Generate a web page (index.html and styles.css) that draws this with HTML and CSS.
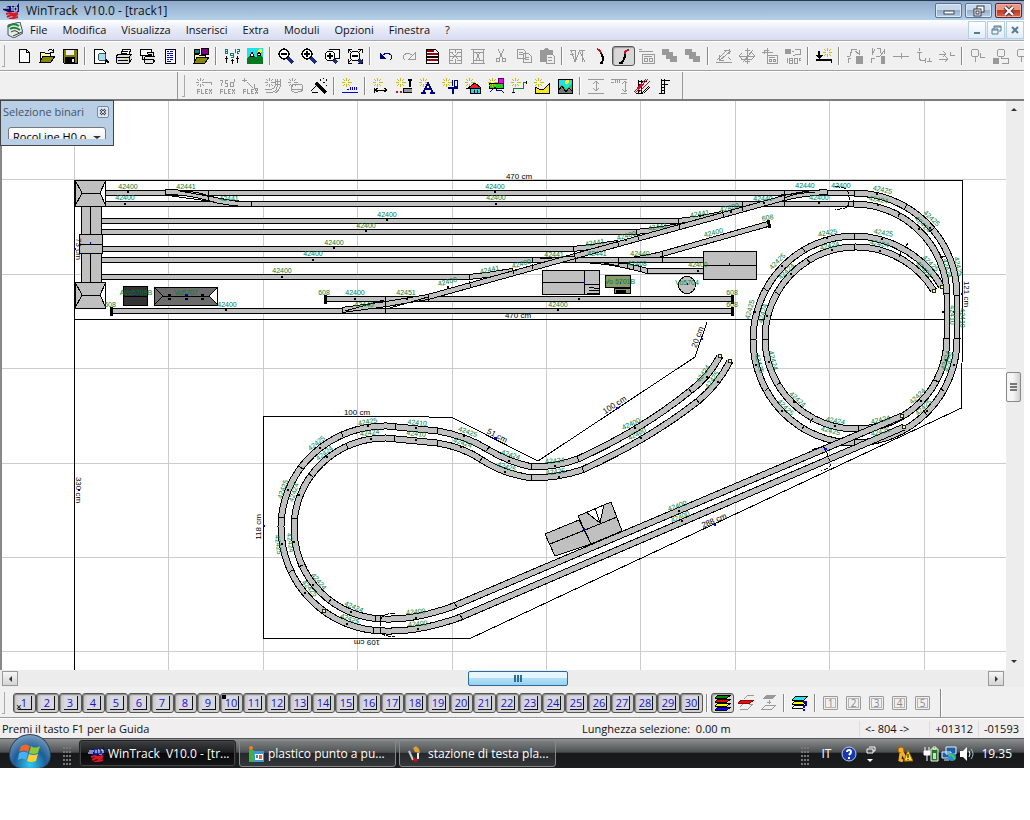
FILE: index.html
```html
<!DOCTYPE html>
<html lang="it">
<head>
    <meta charset="UTF-8">
    <meta name="viewport" content="width=device-width, initial-scale=1.0">
    <title>WinTrack V10.0 - [track1]</title>
    <link rel="stylesheet" href="styles.css">
</head>
<body>

<!-- shapes used by more than one icon -->
<svg class="sprite" aria-hidden="true">
    <symbol id="spark" viewBox="0 0 16 16"><path d="M4.500 0v3M4.500 6v3M0 4.500h3M6 4.500h4M1 1l2 2M8 1l-2 2M1 8l2-2M8 8l-2-2"/></symbol>
    <symbol id="lens" viewBox="0 0 16 16"><path d="M10 10l5 5" stroke="#1c2c80" stroke-width="3"/><circle cx="6" cy="6" r="5" fill="#fff" stroke="#000" stroke-width="1.500"/></symbol>
    <symbol id="loco" viewBox="0 0 16 16"><path d="M0 6l5-3h9l2-3v9H5L0 7z" fill="#10106a"/><path d="M1 5h5" stroke="#fff" stroke-width="1"/><path d="M8 4h1v4M11 4h3v4h-3z" stroke="#fff" fill="none"/><path d="M3 11l4-1 3 1 5-1M4 14l4-2 3 1 4-2M6 16l9-2" stroke="#d81828" stroke-width="2" fill="none"/></symbol>
    <symbol id="stack" viewBox="0 0 16 16"><path d="M0 1h7v3h4v4h4v6H8v-3H4V7H0z"/></symbol>
</svg>

<div class="window">

    <header class="titlebar">
        <svg class="icon" viewBox="0 0 16 16"><use href="#loco"/></svg>
        <h1>WinTrack&nbsp; V10.0 - [track1]</h1>
        <div class="caption-buttons">
            <button aria-label="Riduci a icona"><svg viewBox="0 0 16 12"><rect x="3" y="6" width="10" height="3" fill="#fff" stroke="#445"/></svg></button>
            <button aria-label="Ripristina"><svg viewBox="0 0 16 12"><rect x="6" y="1" width="7" height="6" fill="#fff" stroke="#334"/><rect x="3" y="4" width="7" height="7" fill="#fff" stroke="#334"/><rect x="5" y="6" width="3" height="3" fill="none" stroke="#334"/></svg></button>
            <button class="close" aria-label="Chiudi"><svg viewBox="0 0 16 12"><path d="M4 2l8 8M12 2l-8 8" stroke="#534" stroke-width="4"/><path d="M4 2l8 8M12 2l-8 8" stroke="#fff" stroke-width="2"/></svg></button>
        </div>
    </header>

    <nav class="menubar">
        <svg class="icon" viewBox="0 0 16 16"><path d="M1 3l12-3 3 11-9 5-6-3z" fill="#e4ece4" stroke="#456"/><path d="M1 5q5-5 11-1M3 7q5-3 10 1" fill="none" stroke="#228040" stroke-width="2"/><path d="M4 10q4-3 8 1M6 14l9-4" fill="none" stroke="#333"/></svg>
        <button>File</button>
        <button>Modifica</button>
        <button>Visualizza</button>
        <button>Inserisci</button>
        <button>Extra</button>
        <button>Moduli</button>
        <button>Opzioni</button>
        <button>Finestra</button>
        <button>?</button>
        <div class="mdi-buttons">
            <button aria-label="Riduci documento"><svg viewBox="0 0 12 12"><path d="M3 9h6" stroke="#567a94" stroke-width="2"/></svg></button>
            <button aria-label="Ripristina documento"><svg viewBox="0 0 12 12"><path d="M4 5V2h7v5H9M4 3h7M2 5h6v5H2zM2 6h6" fill="none" stroke="#567a94"/></svg></button>
            <button aria-label="Chiudi documento"><svg viewBox="0 0 12 12"><path d="M3 3l6 6M9 3l-6 6" stroke="#567a94" stroke-width="2"/></svg></button>
        </div>
    </nav>

    <div class="toolbar main-tools" role="toolbar" aria-label="Standard">
        <span class="grip"></span>
        <button class="tool" aria-label="Nuovo"><svg class="icon" viewBox="0 0 16 16"><path d="M3 1h7l3 3v10H3zM10 1v3h3" fill="#fff" stroke="#000"/></svg></button>
        <button class="tool" aria-label="Apri"><svg class="icon" viewBox="0 0 16 16"><path d="M1 14V4h4l1 1h5v3" fill="#ffffa0" stroke="#000"/><path d="M1 14l3-6h12l-4 6z" fill="#868600" stroke="#000"/><path d="M9 3q3-3 5 0M14 1v3h-3" fill="none" stroke="#000"/></svg></button>
        <button class="tool" aria-label="Salva"><svg class="icon" viewBox="0 0 16 16"><path d="M1 1h14v14H2l-1-1z" fill="#808000" stroke="#000"/><path d="M4 2h8v5H4z" fill="#eee"/><path d="M3 9h10v6H3z" fill="#000"/><path d="M10 11h2v3h-2z" fill="#eee"/></svg></button>
        <span class="sep"></span>
        <button class="tool" aria-label="Anteprima"><svg class="icon" viewBox="0 0 16 16"><path d="M1 1h8l3 3v11H1z" fill="#fff" stroke="#000"/><path d="M12 11l4 4" stroke="#000" stroke-width="2"/><circle cx="9" cy="9" r="4" fill="#a8dce8" stroke="#356"/></svg></button>
        <button class="tool" aria-label="Stampa"><svg class="icon" viewBox="0 0 16 16"><path d="M5 6l2-5h8l-2 5" fill="#fff" stroke="#000"/><path d="M0 8l3-2h13v5l-3 4H1z" fill="#ddd" stroke="#000"/><path d="M7 3h5M6 5h5M1 9h12v5M13 9l3-3M2 12h10" fill="none" stroke="#000"/><path d="M9 11h2" stroke="#cc0"/></svg></button>
        <button class="tool" aria-label="Imposta stampa"><svg class="icon" viewBox="0 0 16 16"><path d="M1 1h11v6H1z" fill="#fff" stroke="#000"/><path d="M3 8v3h4M8 6l1-2h6l-1 4M5 10l2-2h9v4l-2 3H6z" fill="#e4e4e4" stroke="#000"/><path d="M6 11h8v3M9 6h4" fill="none" stroke="#000"/></svg></button>
        <button class="tool" aria-label="Elenco"><svg class="icon" viewBox="0 0 16 16"><path d="M3 1h10v14H3z" fill="#fff" stroke="#000"/><path d="M5 3h2M8 3h3M5 5h6M5 7h2M8 7h3M5 9h6M5 11h2M8 11h3M5 13h4" stroke="#0000d0"/></svg></button>
        <span class="sep"></span>
        <button class="tool" aria-label="Biblioteca"><svg class="icon" viewBox="0 0 16 16"><path d="M1 1h5v4H1z" fill="#008080" stroke="#000"/><path d="M8 0h7v6H8z" fill="#800080" stroke="#000"/><path d="M1 15V6h4l1 1h6v3" fill="#ffff80" stroke="#000"/><path d="M1 15l3-6h12l-4 6z" fill="#868600" stroke="#000"/></svg></button>
        <span class="sep"></span>
        <button class="tool" aria-label="Altezze"><svg class="icon" viewBox="0 0 16 16"><path d="M1 1h2v4H1zM1 3h2M6 5h3v4H7M6 5v2h3M11 1v4M13 1h2v2h-2v2h2" fill="none" stroke="#008080"/><path d="M2 8v7M1 10h3M8 11v5M7 12h3M13 8v7M12 10h3" fill="none" stroke="#000"/></svg></button>
        <button class="tool" aria-label="Sfondo"><svg class="icon" viewBox="0 0 16 16"><path d="M0 0h16v16H0z" fill="#20e0e8"/><circle cx="13" cy="3" r="2" fill="#ff0"/><path d="M0 11l5-6 4 5 3-5 4 5v6H0z" fill="#087820"/><path d="M3 8l2-4 2 4-2 1zM10 7l2-3 2 3-2 1z" fill="#fff" stroke="#000"/></svg></button>
        <span class="sep"></span>
        <button class="tool" aria-label="Riduci"><svg class="icon" viewBox="0 0 16 16"><use href="#lens"/><path d="M3 6h6" stroke="#000" stroke-width="2"/></svg></button>
        <button class="tool" aria-label="Ingrandisci"><svg class="icon" viewBox="0 0 16 16"><use href="#lens"/><path d="M3 6h6M6 3v6" stroke="#000" stroke-width="2"/></svg></button>
        <button class="tool" aria-label="Ingrandisci area"><svg class="icon" viewBox="0 0 16 16"><path d="M5 1h10v9h-4" fill="#fff" stroke="#000"/><path d="M9 11l4 4" stroke="#1c2c80" stroke-width="3"/><circle cx="6" cy="8" r="5" fill="#fff" stroke="#000"/><path d="M3 8h6M6 5v6" stroke="#000" stroke-width="2"/></svg></button>
        <button class="tool" aria-label="Mostra tutto"><svg class="icon" viewBox="0 0 16 16"><path d="M1 5V1h4M1 1l3 3M11 1h4v4M15 1l-3 3M1 11v4h4M1 15l3-3M15 11v4h-4" fill="none" stroke="#000"/><path d="M11 11l4 4" stroke="#1c2c80" stroke-width="3"/><circle cx="8" cy="8" r="5" fill="#fff" stroke="#000"/><path d="M5 8h6" stroke="#000" stroke-width="2"/></svg></button>
        <span class="sep"></span>
        <button class="tool" aria-label="Annulla"><svg class="icon" viewBox="0 0 16 16"><path d="M2 5v6h6z" fill="#00007c"/><path d="M4 8q5-5 9-1 2 3-1 5" class="ln navy"/></svg></button>
        <button class="tool" aria-label="Ripeti"><svg class="icon" viewBox="0 0 16 16"><path d="M14 5v6H8zM12 8q-5-5-9-1-2 3 1 5" class="ln dis"/></svg></button>
        <button class="tool" aria-label="Lista materiale"><svg class="icon" viewBox="0 0 16 16"><path d="M2 1h9l3 3v11H2z" fill="#fff" stroke="#000"/><path d="M3 3h7M3 6h11M3 12h11" stroke="#900" stroke-width="2"/><path d="M3 9h11" stroke="#000" stroke-width="2"/></svg></button>
        <button class="tool" aria-label="Dividi" disabled><svg class="icon" viewBox="0 0 16 16"><path d="M2 1h12v14H2zM2 8h12M8 1v4M8 11v4M2 4h4M10 4h4M2 12h4M10 12h4M5 5l6 6M11 5l-6 6" class="ln dis"/></svg></button>
        <button class="tool" aria-label="Unisci" disabled><svg class="icon" viewBox="0 0 16 16"><path d="M1 1h14M1 15h14M3 1v14M13 1v14M3 4h10M3 12h10M6 4l4 8M10 4l-4 8" class="ln dis"/></svg></button>
        <button class="tool" aria-label="Taglia" disabled><svg class="icon" viewBox="0 0 16 16"><path d="M5 1l5 10M11 1L6 11" class="ln dis"/><circle cx="5" cy="12" r="2" class="ln dis"/><circle cx="11" cy="12" r="2" class="ln dis"/></svg></button>
        <button class="tool" aria-label="Copia" disabled><svg class="icon" viewBox="0 0 16 16"><path d="M1 1h6l2 2v7H1zM3 4h4M3 6h4M7 5h5l3 3v6H7zM9 9h4M9 11h4" class="ln dis"/></svg></button>
        <button class="tool" aria-label="Incolla" disabled><svg class="icon" viewBox="0 0 16 16"><path d="M1 2h4l1-2h3l1 2h4v12H1z" fill="#999"/><path d="M7 6h6l2 2v7H7zM9 9h4M9 12h4" fill="#eee" stroke="#999"/></svg></button>
        <span class="sep"></span>
        <button class="tool" aria-label="Binari doppi" disabled><svg class="icon" viewBox="0 0 16 16"><path d="M0 2h6M1 2l4 12L10 2h5M10 4l5 10M5 2l1 12M0 6h4M12 3v11" class="ln dis"/></svg></button>
        <button class="tool" aria-label="Curva sinistra"><svg class="icon" viewBox="0 0 16 16"><path d="M8 5q3 4 1 10M7 15h3" class="ln bold"/><path d="M4 1q3 1 4 4" class="ln bold red"/></svg></button>
        <button class="tool pressed" aria-label="Curva destra" aria-pressed="true"><svg class="icon" viewBox="0 0 16 16"><path d="M5 15q4-3 4-9M3 15h4" class="ln bold"/><path d="M9 6q0-4 4-4" class="ln bold red"/></svg></button>
        <button class="tool" aria-label="Proprietà" disabled><svg class="icon" viewBox="0 0 16 16"><path d="M0 1h3M0 3h14M3 6h12v9H3zM5 8h8M5 10h3v3H5zM10 10h3v3h-3z" class="ln dis"/></svg></button>
        <button class="tool" aria-label="Porta avanti" disabled><svg class="icon gray" viewBox="0 0 16 16"><use href="#stack"/></svg></button>
        <button class="tool" aria-label="Porta indietro" disabled><svg class="icon gray" viewBox="0 0 16 16"><use href="#stack"/></svg></button>
        <span class="sep"></span>
        <button class="tool" aria-label="Ruota" disabled><svg class="icon" viewBox="0 0 16 16"><path d="M0 14h16M1 12L11 2M8 2h5M13 1v5M4 12l11-9M3 7v5h5M12 9l3 3" class="ln dis"/></svg></button>
        <button class="tool" aria-label="Sposta" disabled><svg class="icon" viewBox="0 0 16 16"><path d="M0 8h16M2 11h11M8 0v16M6 2h5M6 13h5M3 5l-3 3 3 3M13 5l3 3-3 3M4 14L14 2" class="ln dis"/></svg></button>
        <button class="tool" aria-label="Posizione" disabled><svg class="icon" viewBox="0 0 16 16"><path d="M0 4h11M5 0v9M3 2h4M2 2v4M5 7h10v8H5zM7 9h6M7 11h2v2H7zM11 11h2v2h-2z" class="ln dis"/></svg></button>
        <button class="tool" aria-label="Ruota di 180°" disabled><svg class="icon" viewBox="0 0 16 16"><path d="M0 1h6v5H0z" fill="#999"/><path d="M7 3h2M10 1h5v5h-5M8 7h2M2 10v5M4 10h3v5H4zM4 12h3M9 10h3v5H9zM14 10h2v2h-2z" class="ln dis"/></svg></button>
        <span class="sep"></span>
        <button class="tool" aria-label="Nuovo livello"><svg class="icon" viewBox="0 0 16 16"><path d="M2 3h2v4h3l-4 4-3-4h2zM0 11h16v4h-1v-2H0z"/><g class="sun" transform="translate(7 0)"><use href="#spark" width="16" height="16"/></g></svg></button>
        <span class="sep"></span>
        <button class="tool" aria-label="Pendenza" disabled><svg class="icon" viewBox="0 0 16 16"><path d="M0 8h3L5 1h5M8 3l4 3V2M1 15v-5h3" class="ln dis"/><path d="M9 8h7v8H9z" fill="#999"/></svg></button>
        <button class="tool" aria-label="Rampa" disabled><svg class="icon" viewBox="0 0 16 16"><path d="M2 0v5M5 1L2 7M7 0h3v5M6 8h4L14 3M14 1v5M1 15v-5h4" class="ln dis"/><path d="M11 8h4v8h-4z" fill="#999"/></svg></button>
        <button class="tool" aria-label="Congiungi" disabled><svg class="icon" viewBox="0 0 16 16"><path d="M0 8h16M8 5v6" class="ln dis"/></svg></button>
        <button class="tool" aria-label="Flessibile" disabled><svg class="icon" viewBox="0 0 16 16"><path d="M3 0v3M1 4h5M3 5v5q1 3 6 3M9 10v5M11 13h5M13 10v3" class="ln dis"/></svg></button>
        <button class="tool" aria-label="Allinea" disabled><svg class="icon" viewBox="0 0 16 16"><path d="M0 6h7M4 3l3 3-3 3M0 11h9M6 8l3 3-3 3M11 4v3h5" class="ln dis"/></svg></button>
        <span class="sep"></span>
        <button class="tool" aria-label="Albero" disabled><svg class="icon" viewBox="0 0 16 16"><circle cx="5" cy="5" r="4" class="ln dis"/><path d="M5 8v6M3 8h4M10 5v4h5" class="ln dis"/></svg></button>
        <button class="tool" aria-label="Alberi" disabled><svg class="icon" viewBox="0 0 16 16"><circle cx="8" cy="5" r="4" class="ln dis"/><path d="M8 8v3M9 10h6v5H9" class="ln dis"/><path d="M0 10h6v6H0z" fill="#999"/></svg></button>
        <button class="tool" aria-label="Bosco" disabled><svg class="icon" viewBox="0 0 16 16"><circle cx="5" cy="5" r="4" class="ln dis"/><path d="M5 8v6M3 8h4M10 5v4h5" class="ln dis"/></svg></button>
    </div>

    <div class="toolbar insert-tools" role="toolbar" aria-label="Inserisci">
        <div class="band">
            <span class="grip"></span>
            <button class="tool" aria-label="Flex curvo" disabled><svg class="icon" viewBox="0 0 16 16"><g class="faint"><use href="#spark" width="16" height="16"/></g><path d="M9 4h6v3M1 16v-5h3M1 13h3M5 11v4h3M12 11h-3v4h3M9 13h2M13 11l3 5M16 11l-3 5" class="ln dis"/></svg></button>
            <button class="tool" aria-label="Flex 75 cm" disabled><svg class="icon" viewBox="0 0 16 16"><path d="M1 2h3L2 8M9 2H6v3h2v3H6M11 4h3v4h-3zM15 1v3M1 16v-5h3M1 13h3M5 11v4h3M12 11h-3v4h3M9 13h2M13 11l3 5M16 11l-3 5" class="ln dis"/></svg></button>
            <button class="tool" aria-label="Flex libero" disabled><svg class="icon" viewBox="0 0 16 16"><path d="M2 0v4M0 2h5M5 4l6 6M12 6v4h4M1 16v-5h3M1 13h3M5 11v4h3M12 11h-3v4h3M9 13h2M13 11l3 5M16 11l-3 5" class="ln dis"/></svg></button>
            <button class="tool" aria-label="Parallelo" disabled><svg class="icon" viewBox="0 0 16 16"><g class="faint"><use href="#spark" width="16" height="16"/></g><path d="M10 1v7q0 4-10 4M12 1v8q0 6-11 6M15 1v8q-1 4-5 6M10 3h5M10 6h5" class="ln dis"/></svg></button>
            <button class="tool" aria-label="Elicoidale" disabled><svg class="icon" viewBox="0 0 16 16"><g class="faint"><use href="#spark" width="16" height="16"/></g><ellipse cx="9" cy="9" rx="6" ry="3" class="ln dis"/><path d="M3 10q0 5 7 4 4 0 5-3" class="ln dis"/></svg></button>
            <button class="tool" aria-label="Procedura guidata"><svg class="icon" viewBox="0 0 16 16"><path d="M5 5l10 10" stroke="#000" stroke-width="3"/><path d="M0 13l8-8M1 14h6M9 1v2M12 0v1M15 1v2M12 4h2M15 7v1" class="ln"/></svg></button>
            <span class="sep"></span>
            <button class="tool" aria-label="Nuovo binario"><svg class="icon" viewBox="0 0 16 16"><g class="sun"><use href="#spark" width="16" height="16"/></g><path d="M0 14h16M5 11h2M8 9v3M10 9v3M12 9v3M14 9v3" class="ln blue"/></svg></button>
            <span class="sep"></span>
            <button class="tool" aria-label="Quota"><svg class="icon" viewBox="0 0 16 16"><g class="sun"><use href="#spark" width="16" height="16"/></g><path d="M1 10v5M16 10v5M2 12h12M5 10l-3 2 3 2M11 10l3 2-3 2" class="ln"/></svg></button>
            <button class="tool" aria-label="Contatto"><svg class="icon" viewBox="0 0 16 16"><g class="sun"><use href="#spark" width="16" height="16"/></g><path d="M14 1v8M12 2h4" class="ln bold"/><path d="M7 10h9v4H7z" fill="#999" stroke="#000"/><path d="M0 14h2M4 14h2" class="ln red bold"/></svg></button>
            <button class="tool" aria-label="Testo"><svg class="icon" viewBox="0 0 16 16"><g class="sun"><use href="#spark" width="16" height="16"/></g><path d="M4 15l5-10 5 10M6 11h6M2 15h5M11 15h5" class="ln navy bold"/></svg></button>
            <button class="tool" aria-label="Altezza"><svg class="icon" viewBox="0 0 16 16"><g class="sun"><use href="#spark" width="16" height="16"/></g><path d="M10 2v6M12 2h3v6h-3z" class="ln navy"/><path d="M6 10h10M11 10v6" class="ln navy bold"/></svg></button>
            <button class="tool" aria-label="Edificio"><svg class="icon" viewBox="0 0 16 16"><g class="sun"><use href="#spark" width="16" height="16"/></g><path d="M3 10l7-5 6 5z" fill="#f02020" stroke="#000"/><path d="M5 10h10v5H5z" fill="#20d8e8" stroke="#000"/><path d="M9 12v3M12 12v3" class="ln"/></svg></button>
            <button class="tool" aria-label="Paesaggio"><svg class="icon" viewBox="0 0 16 16"><path d="M1 5h14v5H1z" fill="#20d020" stroke="#000"/><circle cx="13" cy="3" r="3" fill="#f0f" stroke="#505"/><path d="M2 14l5-5 2 4 4-1 3 3" class="ln navy"/><g class="sun"><use href="#spark" width="16" height="16"/></g></svg></button>
            <button class="tool" aria-label="Linea"><svg class="icon" viewBox="0 0 16 16"><g class="sun"><use href="#spark" width="16" height="16"/></g><path d="M2 15V10h10V4h4" fill="none" stroke="#108030"/><path d="M1 14h3M15 3v3" class="ln"/></svg></button>
            <button class="tool" aria-label="Terreno"><svg class="icon" viewBox="0 0 16 16"><g class="sun"><use href="#spark" width="16" height="16"/></g><path d="M1 9l4 2h5l5-5v9H1z" fill="#f8e820" stroke="#000"/></svg></button>
            <button class="tool" aria-label="Immagine"><svg class="icon" viewBox="0 0 16 16"><path d="M1 1h14v14H1z" fill="#20e0e8"/><circle cx="10" cy="4" r="2" fill="#ff0"/><path d="M1 12l4-6 4 5 5-5 1 1v8H1z" fill="#30c040"/><path d="M1 13l4-5 4 6 3-4 3 3v2H1z" fill="#777"/><path d="M1 1h14v14H1zM1 13l4-5 4 6 3-4 3 3" class="ln"/></svg></button>
            <span class="sep"></span>
            <button class="tool" aria-label="Distanza verticale" disabled><svg class="icon" viewBox="0 0 16 16"><path d="M0 1h16M0 15h16M8 3v10M5 6l3-3 3 3M5 10l3 3 3-3" class="ln dis"/></svg></button>
            <button class="tool" aria-label="Distanza binario" disabled><svg class="icon" viewBox="0 0 16 16"><path d="M0 4h3M4 2v3M6 2v3M8 2v3M0 1h16M14 4v10M11 6l3-3 3 3M11 11l3 3 3-3M10 15h6" class="ln dis"/></svg></button>
            <button class="tool" aria-label="Catenaria"><svg class="icon" viewBox="0 0 16 16"><path d="M4 2v14M7 2v14M4 3h9M4 6h5M4 9h3M4 12h3M2 15h7M10 15l6-6M8 15l7-7" class="ln"/><path d="M0 14L12 1M5 14L16 3M1 15L14 1" class="ln red"/></svg></button>
            <button class="tool" aria-label="Palo"><svg class="icon" viewBox="0 0 16 16"><path d="M4 1v15M7 1v15" class="ln"/><path d="M4 2h9M4 6h7M4 9h3M4 12h3M2 15h6" class="ln"/></svg></button>
        </div>
    </div>

    <main class="workspace">
        <svg class="plan" viewBox="2 101 1004 569" preserveAspectRatio="xMinYMin slice" role="img" aria-label="Piano dei binari">
            <defs>
                <!-- stazione -->
                <path id="t1" d="M106 193H854"/>
                <path id="t2" d="M106 204H854"/>
                <path id="t3" d="M101 221H678Q700 219 722 214"/>
                <path id="t4" d="M101 232H636Q658 230 679 226"/>
                <path id="t5" d="M101 249H573Q595 247 617 243"/>
                <path id="t6" d="M101 260H703"/>
                <path id="t7" d="M101 277H469Q490 275 512 271"/>
                <path id="t8" d="M326 299H732"/>
                <path id="t9" d="M112 311H732"/>
                <path id="t10" d="M342 310Q385 305 428 297L784 198Q805 193 827 192"/>
                <path id="t11" d="M165 192Q188 192 208 198T251 204"/>
                <path id="t12" d="M575 260Q598 260 618 264T647 271H703"/>
                <path id="t13" d="M618 261Q640 260 662 254L768 224"/>
                <!-- anello a destra -->
                <path id="r1" d="M854 193A103 103 0 0 1 957 295V338A103 104 0 0 1 855 443A102 104 0 0 1 753 340A102 104 0 0 1 855 236A103 104 0 0 1 942 287"/>
                <path id="r2" d="M853 204A93 93 0 0 1 947 295V338A91 91 0 0 1 856 429A91 91 0 1 1 934 291"/>
                <!-- cappio a sinistra -->
                <path id="b1" d="M904 427L461 617Q420 632 385 631A104 104 0 0 1 281 527A104 101 0 0 1 387 426L438 431Q466 436 487 449T532 467Q556 467 578 459Q642 430 690 391Q708 378 720 356"/>
                <path id="b2" d="M902 416L454 606Q416 620 385 619A91 91 0 0 1 294 528A91 90 0 0 1 386 438L437 443Q463 447 482 460T531 478Q557 478 582 470Q648 440 697 402Q718 385 730 361"/>
            </defs>

            <g class="grid">
                <path d="M74.500 101V670M168.500 101V670M263.500 101V670M357.500 101V670M452.500 101V670M546.500 101V670M640.500 101V670M735.500 101V670M829.500 101V670M924.500 101V670"/>
                <path d="M2 179.500H1006M2 274.500H1006M2 368.500H1006M2 463.500H1006M2 557.500H1006M2 651.500H1006"/>
            </g>

            <g class="outline">
                <path d="M74.500 670V180.500H962.500V319L961.500 408L470 638.500H263.500V416.500H405L452 417.500L538 461L695 357L707 322"/>
                <path d="M74 319.500H945"/>
            </g>

            <g class="rail">
                <use href="#r1"/><use href="#r1" class="bed"/>
                <use href="#r2"/><use href="#r2" class="bed"/>
                <use href="#b1"/><use href="#b1" class="bed"/>
                <use href="#b2"/><use href="#b2" class="bed"/>
            </g>
            <g class="rail yard">
                <use href="#t12"/><use href="#t12" class="bed"/>
                <use href="#t13"/><use href="#t13" class="bed"/>
                <use href="#t1"/><use href="#t1" class="bed"/>
                <use href="#t2"/><use href="#t2" class="bed"/>
                <use href="#t3"/><use href="#t3" class="bed"/>
                <use href="#t4"/><use href="#t4" class="bed"/>
                <use href="#t5"/><use href="#t5" class="bed"/>
                <use href="#t6"/><use href="#t6" class="bed"/>
                <use href="#t7"/><use href="#t7" class="bed"/>
                <use href="#t8"/><use href="#t8" class="bed"/>
                <use href="#t9"/><use href="#t9" class="bed"/>
                <use href="#t10"/><use href="#t10" class="bed"/>
                <use href="#t11"/><use href="#t11" class="bed"/>
            </g>

            <!-- giunti -->
            <g class="joint">
                <path d="M165 190v6M208 190v12M251 201v6M342 308v6M385 296v18M428 294v8M469 274v6M469 281l2 6M512 268l2 6M532 257v6M532 264l1 5M574 251l2 12M617 240l2 6M637 234l2 6M678 218v6M679 224l1 6M722 210l2 7M742 201v10M784 190v16M827 190v6M854 190v6M853 201v6M618 257v10M662 251v12M628 263l-1 5M634 264l-1 6M641 267l-1 5M647 268v6M636 229v6M573 246v6"/>
                <path d="M784 198L806 191M770 196L815 192M345 311L384 300M390 308L428 297M575 256L540 259M600 262L618 266M172 196L208 201M180 191L240 202"/>
                <path d="M907 204l-3 6M900 212l-2 5M934 228l-5 4M945 256l-5 2M954 295h6M944 293h6M954 338h6M944 338h6M944 391l-4-3M939 382l-5-2M923 410l4 5M854 233v6M854 244v6M905 248l3-5M899 257l2-5M805 252l-3-5M810 263l-3-4M768 291l-5-3M780 295l-5-3M750 339h6M763 339h6M765 391l3-3M777 385l4-3M802 429l3-4M813 418l-3 5M858 426v6M854 440v6"/>
                <path d="M454 603l4 5M459 614l4 5M375 616v6M373 627v6M380 616v6M380 627v6M331 599l-3 5M303 565l-5 2M293 570l-5 3M291 518h6M279 517h6M308 473l5 4M299 466l5 4M346 443l2 6M341 431l2 6M394 435v6M395 424v6M437 440v6M438 428l-1 6M479 462l4-5M486 451l4-5M531 475v6M531 464v6M582 467l2 6M577 456l2 6M688 388l4 5M696 399l4 5"/>
            </g>

            <!-- centri dei binari -->
            <g class="dots">
                <path d="M127 192h2M124 204h2M186 192h2M494 192h2M495 204h2M386 220h2M365 231h2M333 248h2M312 260h2M281 277h2M225 310h2M557 310h2M354 299h2M578 299h2M818 203h2M730 212h2M699 216h2M625 240h2M515 270h2M447 287h2M406 299h2M697 271h2M763 203h2"/>
                <path d="M678 511h2M681 521h2M634 428h2M640 438h2M706 377h2M717 382h2M554 466h2M558 477h2M415 618h2M417 629h2M350 612h2M346 624h2M312 585h2M304 593h2M293 542h2M281 544h2M298 495h2M287 490h2M326 457h2M319 448h2M370 439h2M367 426h2M415 440h2M415 428h2M460 447h2M463 436h2M504 472h2M508 461h2"/>
                <path d="M876 194h2M877 205h2M918 229h2M929 228h2M953 312h2M942 312h2M945 360h2M953 365h2M920 401h2M926 411h2M834 426h2M793 402h2M781 411h2M768 362h2M755 365h2M754 312h2M766 316h2M781 266h2M790 274h2M826 238h2M831 250h2M881 239h2M879 251h2"/>
            </g>
            <g class="ends">
                <circle cx="934" cy="291" r="2"/><circle cx="942" cy="287" r="2"/><circle cx="902" cy="416" r="2"/><circle cx="904" cy="427" r="2"/><circle cx="720" cy="356" r="2"/><circle cx="730" cy="361" r="2"/><circle cx="324" cy="611" r="2"/>
            </g>

            <!-- respingenti -->
            <path class="buffer" d="M325 295v9M111 307v9M732 295v9M732 307v9M768 220l2 8"/>

            <!-- gallerie -->
            <path class="portal" d="M835 187q14-1 14 10v5q0 8-14 7M395 613q-15 1-15 9v8q0 6 15 7M812 450q6-4 13-2l6 16q0 4-10 7"/>

            <g class="building">
                <path d="M81.500 206.500h20v76h-20zM90.500 206v76"/>
                <path d="M75.500 180.500h30v26h-30zM75 180l7 13-7 13M106 180l-6 13 6 13M82 193.500h18"/>
                <path d="M79.500 234.500h23v19h-23zM79 244.500h24"/>
                <path d="M75.500 282.500h30v26h-30zM75 282l7 13-7 13M106 282l-6 13 6 13M82 295.500h18"/>
                <path d="M703.500 251.500h53v28h-53zM703 265.500h53"/>
                <path d="M542.500 270.500h57v24h-57zM584.500 270v24M542 282.500h42M584 284.500h16M589 287l10 2M589 290h10M587 293.500h12"/>
                <path d="M545 534L579 520L591 544L555 556ZM550 544L585 530"/>
                <path d="M578 516L611 502L622 531L591 544ZM585 530L617 517M586 512L600 523L604 505M595 508L600 523"/>
                <circle cx="687" cy="285" r="8.500"/>
            </g>
            <path class="house-dark" d="M123.500 286.500h24v19h-24zM123 296.500h24"/>
            <path class="house-mid" d="M154.500 287.500h63v18h-63zM154 287l9 9-9 9M218 287l-9 9 9 9M163 296.500h46"/>
            <path class="house-windows" d="M168 294h3v2h-3zM168 298h3v2h-3zM185 294h3v2h-3zM185 298h3v2h-3zM201 294h3v2h-3zM201 298h3v2h-3z"/>
            <path class="house-green" d="M605.500 275.500h25v12h-25zM614.500 288.500h16v5h-16z"/>
            <path class="house-windows" d="M616 290h10v3h-10z"/>
            <path class="anchor" d="M90 243h1M134 295h1M186 295h1M584 282h1M620 283h1M687 284h1M729 264h1M584 529h1M78 490h2M74 249h2M961 294h2M263 526h2M494 438h3M616 408h3M701 339h2M714 525h2M824 449h3"/>

            <!-- codici dei binari -->
            <g class="code">
                <text x="128" y="189">42400</text><text x="186" y="189">42441</text><text x="495" y="189">42400</text><text x="805" y="188">42440</text><text x="841" y="188">42400</text>
                <text x="125" y="200">42400</text><text x="229" y="201">42441</text><text x="496" y="200">42400</text><text x="763" y="201">42440</text><text x="819" y="200">42400</text>
                <text x="387" y="217">42400</text><text x="366" y="228">42400</text><text x="334" y="245">42400</text><text x="313" y="256">42400</text><text x="282" y="273">42400</text>
                <text transform="translate(700 216) rotate(-10)">42441</text><text transform="translate(658 229) rotate(-10)">42441</text><text transform="translate(595 245) rotate(-10)">42441</text><text transform="translate(627 238) rotate(-15)">42400</text>
                <text transform="translate(730 210) rotate(-15)">42400</text><text transform="translate(714 235) rotate(-14)">42400</text><text transform="translate(768 220) rotate(-10)">608</text>
                <text x="554" y="257">42441</text><text x="597" y="256">42441</text><text x="640" y="256">42440</text><text x="637" y="266">42408</text><text x="698" y="267">42400</text>
                <text transform="translate(490 272) rotate(-12)">42441</text><text transform="translate(522 266) rotate(-15)">42400</text><text transform="translate(448 284) rotate(-14)">42400</text>
                <text x="406" y="295">42451</text><text x="355" y="295">42400</text><text x="324" y="295">608</text><text x="110" y="307">608</text><text x="227" y="307">42400</text><text x="364" y="307">42440</text><text x="558" y="307">42400</text><text x="732" y="295">608</text><text x="732" y="307">608</text>
                <text x="136" y="295">AVo5709B</text><text x="186" y="295">Vo5707</text><text x="620" y="284">Vo 5701B</text><text x="687" y="285">Vo5704</text>

                <text transform="translate(882 192) rotate(12)">42425</text><text transform="translate(878 202) rotate(10)">42424</text><text transform="translate(930 220) rotate(43)">42425</text><text transform="translate(921 226) rotate(45)">42424</text>
                <text transform="translate(956 267) rotate(78)">42425</text><text transform="translate(945 269) rotate(75)">42424</text><text transform="translate(960 318) rotate(90)">42410</text><text transform="translate(950 315) rotate(90)">42410</text>
                <text transform="translate(828 235) rotate(-10)">42425</text><text transform="translate(830 248) rotate(-12)">42424</text><text transform="translate(883 235) rotate(10)">42425</text><text transform="translate(879 246) rotate(10)">42424</text>
                <text transform="translate(929 265) rotate(45)">42425</text><text transform="translate(922 271) rotate(48)">42424</text><text transform="translate(779 263) rotate(-45)">42425</text><text transform="translate(788 273) rotate(-45)">42424</text>
                <text transform="translate(752 310) rotate(-75)">42425</text><text transform="translate(765 314) rotate(-75)">42424</text><text transform="translate(757 364) rotate(75)">42425</text><text transform="translate(771 361) rotate(75)">42424</text>
                <text transform="translate(784 409) rotate(45)">42425</text><text transform="translate(796 401) rotate(42)">42424</text><text transform="translate(830 433) rotate(14)">42425</text><text transform="translate(835 423) rotate(10)">42424</text>
                <text transform="translate(881 422) rotate(-13)">42424</text><text transform="translate(881 434) rotate(-14)">42425</text><text transform="translate(919 398) rotate(-42)">42424</text><text transform="translate(925 409) rotate(-45)">42425</text>
                <text transform="translate(948 361) rotate(-73)">42424</text><text transform="translate(951 363) rotate(-73)">42425</text>

                <text transform="translate(368 424) rotate(-10)">42425</text><text transform="translate(370 435) rotate(-8)">42424</text><text transform="translate(417 425) rotate(6)">42410</text><text transform="translate(416 436) rotate(6)">42410</text>
                <text transform="translate(467 434) rotate(20)">42425</text><text transform="translate(462 445) rotate(18)">42424</text><text transform="translate(510 457) rotate(18)">42424</text><text transform="translate(506 469) rotate(18)">42425</text>
                <text transform="translate(318 445) rotate(-38)">42425</text><text transform="translate(326 455) rotate(-38)">42424</text><text transform="translate(285 490) rotate(-70)">42425</text><text transform="translate(296 493) rotate(-72)">42424</text>
                <text transform="translate(276 545) rotate(83)">42425</text><text transform="translate(288 543) rotate(83)">42424</text><text transform="translate(308 590) rotate(48)">42425</text><text transform="translate(317 583) rotate(50)">42424</text>
                <text transform="translate(349 621) rotate(20)">42425</text><text transform="translate(353 609) rotate(22)">42424</text><text transform="translate(416 614) rotate(-5)">42400</text><text transform="translate(418 626) rotate(-5)">42400</text>
                <text transform="translate(555 463) rotate(-5)">42424</text><text transform="translate(556 474) rotate(-8)">42425</text><text transform="translate(632 426) rotate(-25)">42400</text><text transform="translate(638 436) rotate(-28)">42400</text>
                <text transform="translate(705 375) rotate(-55)">42424</text><text transform="translate(714 381) rotate(-55)">42425</text><text transform="translate(678 508) rotate(-20)">42400</text><text transform="translate(681 519) rotate(-22)">42400</text>
            </g>

            <!-- quote -->
            <g class="measure">
                <text x="519" y="179">470 cm</text>
                <text x="518" y="318">470 cm</text>
                <text x="357" y="415">100 cm</text>
                <text transform="translate(76 249) rotate(90)">73 cm</text>
                <text transform="translate(76 490) rotate(90)">330 cm</text>
                <text transform="translate(964 294) rotate(90)">121 cm</text>
                <text transform="translate(261 527) rotate(-90)">118 cm</text>
                <text transform="translate(367 640) rotate(180)">109 cm</text>
                <text transform="translate(496 438) rotate(27)">51 cm</text>
                <text transform="translate(616 407) rotate(-33)">100 cm</text>
                <text transform="translate(700 338) rotate(-70)">20 cm</text>
                <text transform="translate(715 523) rotate(-23)">288 cm</text>
            </g>
        </svg>

        <div class="scroll-v">
            <button class="arrow" aria-label="Su"><i class="tri up"></i></button>
            <span class="space-a"></span>
            <button class="thumb" aria-label="Scorri in verticale"><i></i><i></i><i></i></button>
            <span class="space-b"></span>
            <button class="arrow" aria-label="Giù"><i class="tri down"></i></button>
        </div>

        <aside class="palette">
            <div class="palette-head">
                <label for="system">Selezione binari</label>
                <button aria-label="Chiudi palette"><svg viewBox="0 0 12 12"><path d="M3 3l6 6M9 3l-6 6" stroke="#445" stroke-width="3"/><path d="M3 3l6 6M9 3l-6 6" stroke="#fff"/></svg></button>
            </div>
            <div class="palette-body">
                <select id="system">
                    <option>RocoLine H0 o</option>
                </select>
                <i class="tri down"></i>
            </div>
        </aside>
    </main>

    <div class="scroll-h">
        <button class="arrow framed" aria-label="Sinistra"><i class="tri left"></i></button>
        <span class="space-a"></span>
        <button class="thumb" aria-label="Scorri in orizzontale"><i></i><i></i><i></i></button>
        <span class="space-b"></span>
        <button class="arrow framed" aria-label="Destra"><i class="tri right"></i></button>
    </div>

    <div class="toolbar layer-tools" role="toolbar" aria-label="Livelli">
        <span class="grip"></span>
        <button class="layer crossed"><span>1</span></button>
        <button class="layer"><span>2</span></button>
        <button class="layer"><span>3</span></button>
        <button class="layer"><span>4</span></button>
        <button class="layer"><span>5</span></button>
        <button class="layer"><span>6</span></button>
        <button class="layer"><span>7</span></button>
        <button class="layer"><span>8</span></button>
        <button class="layer"><span>9</span></button>
        <button class="layer current"><span>10</span></button>
        <button class="layer"><span>11</span></button>
        <button class="layer"><span>12</span></button>
        <button class="layer"><span>13</span></button>
        <button class="layer"><span>14</span></button>
        <button class="layer"><span>15</span></button>
        <button class="layer"><span>16</span></button>
        <button class="layer"><span>17</span></button>
        <button class="layer"><span>18</span></button>
        <button class="layer"><span>19</span></button>
        <button class="layer"><span>20</span></button>
        <button class="layer"><span>21</span></button>
        <button class="layer"><span>22</span></button>
        <button class="layer"><span>23</span></button>
        <button class="layer"><span>24</span></button>
        <button class="layer"><span>25</span></button>
        <button class="layer"><span>26</span></button>
        <button class="layer"><span>27</span></button>
        <button class="layer"><span>28</span></button>
        <button class="layer"><span>29</span></button>
        <button class="layer"><span>30</span></button>
        <span class="sep"></span>
        <button class="tool pressed" aria-label="Tutti i livelli"><svg class="icon" viewBox="0 0 16 16"><path d="M0 15l3-3h13l-4 3z" fill="#00f" stroke="#000"/><path d="M0 11l3-3h13l-4 3z" fill="#ff0" stroke="#000"/><path d="M0 7l3-3h13l-4 3z" fill="#d00" stroke="#000"/><path d="M0 3l3-3h13l-4 3z" fill="#080" stroke="#000"/></svg></button>
        <button class="tool" aria-label="Livello attivo"><svg class="icon" viewBox="0 0 16 16"><path d="M6 4l4-4h6M2 14h8l5-5h-4M2 12l3-3" class="ln dis"/><path d="M0 8l4-3h12l-4 3z" fill="#e01010" stroke="#900"/></svg></button>
        <button class="tool" aria-label="Sposta nel livello" disabled><svg class="icon" viewBox="0 0 16 16"><path d="M1 4l4-4h11l-5 4z" fill="#999"/><path d="M8 5v4M6 7h4M1 14l4-4h10l-4 4z" class="ln dis"/></svg></button>
        <span class="sep"></span>
        <button class="tool" aria-label="Descrizione livelli"><svg class="icon" viewBox="0 0 16 16"><path d="M0 13l3-3h11l-3 3z" fill="#fff" stroke="#000"/><path d="M0 9l3-3h12l-3 3z" fill="#ff0" stroke="#000"/><path d="M0 5l4-4h12l-4 4z" fill="#20e8f0" stroke="#000"/><path d="M11 7h3v3l-2 1v2M12 14v2" stroke="#00c" stroke-width="2" fill="none"/></svg></button>
        <span class="sep"></span>
        <button class="tool view" disabled><span>1</span></button>
        <button class="tool view" disabled><span>2</span></button>
        <button class="tool view" disabled><span>3</span></button>
        <button class="tool view" disabled><span>4</span></button>
        <button class="tool view" disabled><span>5</span></button>
        <span class="sep"></span>
    </div>

    <footer class="statusbar">
        <span class="hint">Premi il tasto F1 per la Guida</span>
        <span class="length">Lunghezza selezione:&nbsp; 0.00 m</span>
        <span class="cell range">&lt;- 804 -&gt;</span>
        <span class="cell">+01312</span>
        <span class="cell">-01593</span>
    </footer>

    <div class="taskbar">
        <button class="start" aria-label="Start"><svg viewBox="0 0 24 24"><path d="M3 6q5-3 9 0l-2 6q-4-3-9 0z" fill="#f0662a"/><path d="M13 6q4 3 9 0l-2 7q-5 2-9 0z" fill="#8cc83c"/><path d="M1 13q4-3 9 0l-2 7q-4-3-8 0z" fill="#48b0f0"/><path d="M11 14q4 2 9 0l-2 7q-5 2-9 0z" fill="#fcd030"/></svg></button>
        <span class="dots-grip"></span>
        <button class="task active"><svg class="icon" viewBox="0 0 16 16"><use href="#loco"/><path d="M6 3h9v5H6z" fill="#2030b0"/><path d="M8 4v3M10 4h1v3M13 4h2v3M0 7h5" stroke="#fff" fill="none"/></svg><span>WinTrack&nbsp; V10.0 - [tr...</span></button>
        <button class="task"><svg class="icon" viewBox="0 0 16 16"><circle cx="3" cy="2" r="2" fill="#f08020"/><path d="M1 4h5l-1 12H1z" fill="#40b040"/><path d="M5 5h11v11H5z" fill="#3898d8"/><path d="M7 8h8v6H7z" fill="#fff"/><path d="M11 9h3v4h-3z" fill="#f06020"/><path d="M8 9h2v3H8z" fill="#48a"/></svg><span>plastico punto a pu...</span></button>
        <button class="task"><svg class="icon" viewBox="0 0 16 16"><path d="M1 5l4 9" stroke="#ccc" stroke-width="2"/><path d="M5 2l3-2 3 3 1 4-5-1z" fill="#e0a030"/><path d="M10 7v6" stroke="#eee" stroke-width="2"/><path d="M5 11l5 2-1 3H6z" fill="#b01818"/></svg><span>stazione di testa pla...</span></button>
        <div class="tray">
            <span class="dots-grip"></span>
            <span class="lang">IT</span>
            <svg class="icon help" viewBox="0 0 16 16"><circle cx="8" cy="8" r="7" fill="#1838a8" stroke="#b8c8f8"/><path d="M6 6q0-2 2-2t2 2q0 1-2 3M8 11v2" fill="none" stroke="#fff" stroke-width="2"/></svg>
            <svg class="icon" viewBox="0 0 16 16"><path d="M8 1h6v4h-2M6 3h6v4H6z" fill="none" stroke="#fff"/><path d="M6 13h6l-3 3z" fill="#fff"/></svg>
            <svg class="icon keys" viewBox="0 0 16 16"><circle cx="4" cy="4" r="3" fill="#f8b020" stroke="#a06000"/><path d="M5 6l5 9M4 7l-1 7 3 1" stroke="#f8b020" stroke-width="3" fill="none"/><path d="M11 4l5 11H7z" fill="#ffe040" stroke="#a06000"/><path d="M11 8v4M11 13v1" stroke="#000"/></svg>
            <svg class="icon power" viewBox="0 0 16 16"><path d="M8 3h7v12H8zM10 1h3v2h-3z" fill="#2c7030" stroke="#e8ffe0"/><path d="M10 7h3v6h-3z" fill="#b8e8b0"/><path d="M2 1v4M6 1v4M1 5h6v4H1zM4 9v6" fill="#fff" stroke="#fff"/></svg>
            <svg class="icon" viewBox="0 0 16 16"><path d="M5 1h10v7H5zM1 6h9v6H1zM3 14h5" fill="#1860a8" stroke="#e8f4ff"/><circle cx="11" cy="11" r="4" fill="#2090d8"/><path d="M8 10q3-2 4 0t2 3" stroke="#50c850" stroke-width="2" fill="none"/></svg>
            <svg class="icon" viewBox="0 0 16 16"><path d="M1 5h3l4-4v14l-4-4H1z" fill="#fff"/><path d="M10 5q2 3 0 6" fill="none" stroke="#fff"/><path d="M12 3q4 5 0 10" fill="none" stroke="#9cc"/></svg>
            <time>19.35</time>
        </div>
    </div>

</div>

</body>
</html>
```
FILE: styles.css
```css
* {
    box-sizing: border-box;
}

body {
    margin: 0;
    background: #fff;
    color: #111;
    font-family: 'Open Sans', 'Noto Sans', sans-serif;
    font-size: 12px;
    line-height: 16px;
}

button {
    margin: 0;
    padding: 0;
    border: 0;
    background: none;
    color: inherit;
    font: inherit;
}

svg {
    display: block;
}

.sprite {
    position: absolute;
    width: 0;
    height: 0;
}

.window {
    display: flex;
    flex-direction: column;
    min-height: 480px;
    height: calc(100vh - 52px);
    margin-right: 6px;
    background: #f0f0f0;
}

.icon {
    flex: none;
    width: 16px;
    height: 16px;
}

.tool .icon {
    shape-rendering: crispEdges;
}

/* icon strokes */
.ln {
    fill: none;
    stroke: #000;
}

.dis {
    stroke: #999;
}

.navy {
    stroke: #00007c;
}

.blue {
    stroke: #0000d8;
}

.red {
    stroke: #c81028;
}

.bold {
    stroke-width: 2;
}

.gray {
    fill: #999;
}

.sun {
    stroke: #c8c000;
}

.faint {
    stroke: #999;
}

/* title and menu */
.titlebar {
    display: flex;
    flex: none;
    align-items: center;
    height: 20px;
    padding-left: 3px;
    border-top: 1px solid #26374f;
    background: linear-gradient(#8fabcb, #b4cfe8);
}

.titlebar h1 {
    margin: 0;
    padding-left: 7px;
    font-size: 12px;
    font-weight: normal;
}

.caption-buttons {
    display: flex;
    gap: 3px;
    margin-left: auto;
    padding-right: 2px;
}

.caption-buttons button {
    width: 27px;
    height: 15px;
    border: 1px solid #5c7590;
    border-radius: 2px;
    background: linear-gradient(#c5d8ea 45%, #94b0cc 50%, #b8d0e6);
    box-shadow: inset 0 0 0 1px #dce8f4;
}

.caption-buttons .close {
    border-color: #6a2020;
    background: linear-gradient(#e89888 45%, #c03820 50%, #d86850);
    box-shadow: inset 0 0 0 1px #f0b0a4;
}

.caption-buttons svg {
    width: 16px;
    height: 12px;
    margin: 0 auto;
}

.menubar {
    display: flex;
    flex: none;
    align-items: center;
    gap: 15px;
    height: 21px;
    padding-left: 7px;
    border-bottom: 1px solid #a8a8b0;
    background: linear-gradient(#fff, #e6eaf8 50%, #d8dcf0);
    font-size: 11px;
}

.menubar > .icon {
    margin-right: -8px;
}

.mdi-buttons {
    display: flex;
    gap: 1px;
    margin-left: auto;
}

.mdi-buttons button {
    width: 18px;
    height: 18px;
    border: 1px solid #b4d0e0;
    background: linear-gradient(#fff, #e0ecf8);
}

.mdi-buttons svg {
    width: 12px;
    height: 12px;
    margin: 0 auto;
}

/* toolbars */
.toolbar {
    display: flex;
    flex: none;
    align-items: center;
    overflow: hidden;
    background: #f0f0f0;
}

.main-tools {
    height: 30px;
    padding-left: 2px;
    border-top: 1px solid #fff;
    border-bottom: 1px solid #a0a0a0;
}

.insert-tools {
    height: 30px;
    padding-left: 177px;
    border-top: 1px solid #fff;
    border-bottom: 2px solid #7c7c7c;
}

.band {
    display: flex;
    align-items: center;
    height: 27px;
    padding-left: 4px;
    padding-right: 6px;
    border: 1px solid #999;
    border-width: 0 1px;
}

.grip {
    flex: none;
    width: 3px;
    height: 22px;
    margin-right: 7px;
    border: 1px solid #aaa;
    border-width: 0 1px 1px 0;
}

.sep {
    flex: none;
    width: 2px;
    height: 18px;
    margin: 0 3px;
    border-left: 1px solid #888;
    border-right: 1px solid #fff;
}

.tool {
    display: flex;
    flex: none;
    align-items: center;
    justify-content: center;
    width: 23px;
    height: 20px;
}

.tool.pressed {
    border: 1px solid #555;
    border-radius: 3px;
    background: #d8d8d8;
    box-shadow: inset 1px 1px 1px #999;
}

/* drawing area */
.workspace {
    position: relative;
    display: flex;
    flex: 1;
    min-height: 0;
    border-left: 2px solid #888;
    background: #fff;
}

.plan {
    flex: 1;
    min-width: 0;
    height: 100%;
    background: #fff;
    font-family: 'Liberation Sans', Arial, sans-serif;
    shape-rendering: crispEdges;
}

.grid {
    fill: none;
    stroke: #ccc;
}

.outline {
    fill: none;
    stroke: #000;
}

.rail {
    fill: none;
    stroke: #000;
    stroke-width: 7;
}

.bed {
    stroke: #c0c0c0;
    stroke-width: 5;
}

.yard {
    stroke-width: 6;
}

.yard .bed {
    stroke-width: 4;
}

.joint,
.portal {
    fill: none;
    stroke: #000;
}

.portal {
    stroke-dasharray: 5 1;
}

.dots {
    fill: none;
    stroke: #000;
    stroke-width: 2;
}

.ends {
    fill: #ffff80;
    stroke: #222;
}

.buffer {
    fill: none;
    stroke: #000;
    stroke-width: 3;
}

.building {
    fill: #c0c0c0;
    stroke: #000;
}

.house-dark {
    fill: #333;
    stroke: #000;
}

.house-mid {
    fill: #6c6c6c;
    stroke: #000;
}

.house-green {
    fill: #8a9a68;
    stroke: #000;
}

.house-windows {
    fill: #000;
}

.anchor {
    stroke: #0000e0;
    stroke-width: 2;
}

.code {
    fill: #007c38;
    font-size: 7px;
    text-anchor: middle;
}

.measure {
    fill: #000;
    font-size: 8px;
    text-anchor: middle;
}

/* scroll bars */
.scroll-v {
    display: flex;
    flex: none;
    flex-direction: column;
    width: 18px;
    padding-right: 2px;
    background: #ededed;
}

.scroll-h {
    display: flex;
    flex: none;
    height: 17px;
    padding: 1px 20px 1px 2px;
    background: #ececec;
}

.arrow {
    display: flex;
    flex: none;
    align-items: center;
    justify-content: center;
    width: 16px;
    height: 17px;
}

.scroll-h .arrow {
    height: 15px;
}

.framed {
    border: 1px solid #999;
    background: linear-gradient(#f6f6f6, #d4d4d4);
}

.tri {
    width: 0;
    height: 0;
    border: 3px solid transparent;
}

.tri.up {
    border-top: 0;
    border-bottom-color: #333;
}

.tri.down {
    border-bottom: 0;
    border-top-color: #333;
}

.tri.left {
    border-left: 0;
    border-right-color: #333;
}

.tri.right {
    border-right: 0;
    border-left-color: #333;
}

.thumb {
    display: flex;
    flex: none;
    align-items: center;
    justify-content: center;
    gap: 1px;
    border: 1px solid #888;
    border-radius: 2px;
}

.scroll-v .thumb {
    flex-direction: column;
    height: 30px;
    width: 15px;
    background: linear-gradient(90deg, #f6f6f6 45%, #d0d0d4);
}

.scroll-v .thumb i {
    width: 7px;
    height: 2px;
    background: #777;
}

.scroll-h .thumb {
    width: 10%;
    border-color: #2c6c98;
    background: linear-gradient(#e4f5fd 45%, #b0e0f8 50%, #98d0f0);
}

.scroll-h .thumb i {
    width: 2px;
    height: 7px;
    background: #2c6c98;
}

.scroll-v .space-a {
    flex: 254;
}

.scroll-v .space-b {
    flex: 251;
}

.scroll-h .space-a {
    flex: 449;
}

.scroll-h .space-b {
    flex: 419;
}

/* floating track palette */
.palette {
    position: absolute;
    top: -1px;
    left: -2px;
    width: 114px;
    height: 46px;
    border: 1px solid #444;
    background: #b9cfe6;
    font-size: 11px;
}

.palette-head {
    display: flex;
    align-items: center;
    justify-content: space-between;
    height: 21px;
    padding: 0 4px 0 2px;
    color: #445468;
}

.palette-head button {
    width: 12px;
    height: 12px;
    border: 1px solid #7888a0;
    border-radius: 2px;
    background: #dce8f4;
}

.palette-head svg {
    width: 10px;
    height: 10px;
}

.palette-body {
    position: relative;
    height: 17px;
    margin: 0 7px;
    padding-top: 5px;
    overflow: hidden;
}

.palette-body select {
    display: block;
    width: 100%;
    height: 20px;
    padding: 0 4px;
    border: 1px solid #777;
    border-radius: 3px;
    appearance: none;
    background: linear-gradient(#fff, #e4e8ee);
    font: inherit;
}

.palette-body .tri {
    position: absolute;
    right: 5px;
    bottom: 0;
    border-width: 3px 4px 0;
}

/* layers */
.layer-tools {
    height: 31px;
    padding-left: 2px;
    padding-top: 1px;
    border-bottom: 1px solid #999;
}

.layer-tools .grip {
    margin-right: 8px;
}

.layer {
    position: relative;
    display: flex;
    flex: none;
    align-items: center;
    justify-content: center;
    width: 23px;
    height: 20px;
    border: 1px solid #555;
    border-radius: 3px;
    background: #d0d0d0;
    box-shadow: inset 1px 1px 1px #888;
    color: #1c10d0;
}

.layer span {
    min-width: 14px;
    height: 14px;
    border: 1px solid #111;
    border-width: 0 1px 1px 0;
    background: #d8d8e0;
    font-size: 11px;
    line-height: 14px;
    text-align: center;
}

.layer.crossed::after {
    content: '×';
    position: absolute;
    left: 2px;
    bottom: 0;
    color: #000;
    font-size: 10px;
    line-height: 10px;
}

.layer.current::after {
    content: '';
    position: absolute;
    top: 1px;
    left: 1px;
    width: 4px;
    height: 4px;
    background: #000;
}

.view span {
    width: 15px;
    height: 14px;
    border: 1px solid #999;
    border-radius: 1px;
    box-shadow: inset 0 0 0 1px #f0f0f0, inset 0 0 0 2px #b4b4b4;
    color: #888;
    font-size: 10px;
    line-height: 12px;
}

.layer-tools .sep:last-child {
    height: 28px;
    margin-left: 6px;
}

/* status bar */
.statusbar {
    display: flex;
    flex: none;
    align-items: center;
    height: 20px;
    padding-left: 2px;
    padding-top: 1px;
    border-top: 1px solid #fff;
    background: #f0eeee;
    font-size: 11px;
    white-space: nowrap;
}

.hint {
    flex: 1;
}

.length {
    width: 277px;
}

.cell {
    padding: 0 5px;
    border-left: 1px solid #ddd;
}

.range {
    padding-right: 20px;
}

/* taskbar */
.taskbar {
    position: relative;
    display: flex;
    flex: none;
    align-items: center;
    gap: 3px;
    height: 30px;
    padding-left: 63px;
    border-top: 1px solid #555;
    background: linear-gradient(#8c9090, #4c5050 45%, #16181a 50%, #1c1e20);
    color: #fff;
}

.start {
    position: absolute;
    left: 9px;
    bottom: 0;
    display: flex;
    align-items: center;
    justify-content: center;
    width: 42px;
    height: 34px;
    border: 1px solid #284058;
    border-bottom: 0;
    border-radius: 21px 21px 12px 12px;
    background: radial-gradient(circle at 50% 90%, #30c8f0, #1c5c98 45%, #6890b4 75%, #b0c8dc);
}

.start svg {
    width: 24px;
    height: 24px;
}

.dots-grip {
    flex: none;
    width: 9px;
    height: 22px;
    margin-right: 4px;
    background-image: radial-gradient(circle at 1px 1px, #777 1px, transparent 1px);
    background-size: 3px 4px;
}

.task {
    display: flex;
    flex: 0 1 157px;
    align-items: center;
    gap: 4px;
    min-width: 0;
    height: 27px;
    padding-left: 8px;
    overflow: hidden;
    border: 1px solid #888;
    border-radius: 3px;
    background: linear-gradient(#7c7f80, #505354 45%, #26282a 50%, #34383a);
    white-space: nowrap;
}

.task.active {
    border-color: #222;
    background: linear-gradient(#3c3e40, #1c1e20 45%, #060708 50%, #16181a);
    box-shadow: inset 0 0 0 1px #444;
}

.tray {
    display: flex;
    align-items: center;
    gap: 2px;
    margin-left: auto;
    padding-right: 12px;
}

.tray .dots-grip {
    margin-right: 9px;
}

.tray .help {
    margin: 0 2px 0 8px;
}

.tray .keys {
    margin: 0 8px 0 18px;
}

.tray time {
    padding-left: 4px;
}
```
